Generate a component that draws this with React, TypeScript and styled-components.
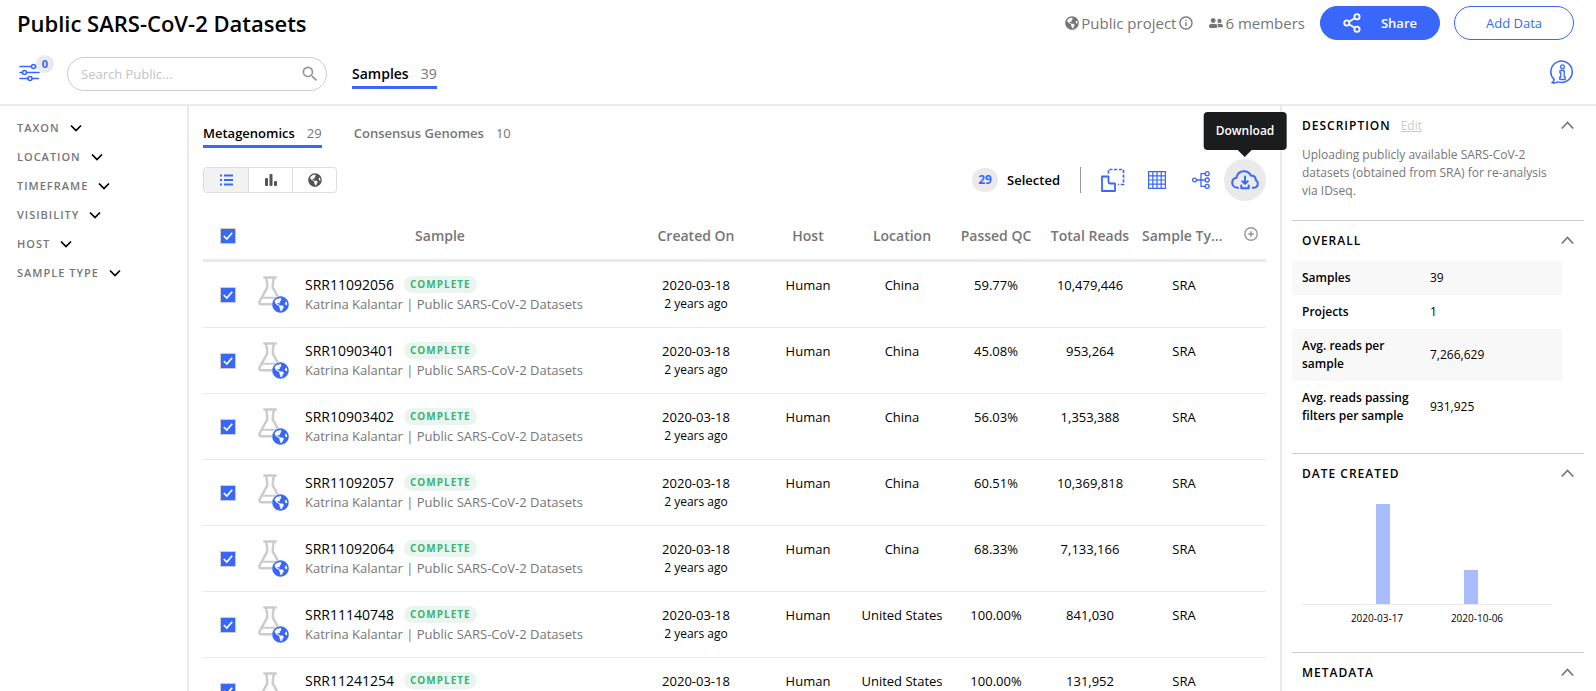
import React from 'react';
import styled, { createGlobalStyle, css } from 'styled-components';
import { FaGlobeAmericas, FaUserFriends } from 'react-icons/fa';
import { MdSearch, MdInfoOutline } from 'react-icons/md';

const BLUE = '#3867fa';
const GRAY = '#767676';
const LINE = '#eaeaea';

const GlobalStyle = createGlobalStyle`
  *, *::before, *::after { box-sizing: border-box; }
  body {
    margin: 0;
    background: #fff;
    color: #000;
    font-family: 'Open Sans', 'Noto Sans', sans-serif;
    font-size: 13px;
    line-height: 18px;
  }
  button, input { font: inherit; color: inherit; }
  button { background: none; border: 0; padding: 0; cursor: pointer; }
  h1, h2, p { margin: 0; font-weight: inherit; }
  svg { display: block; flex: none; }
`;

const Page = styled.div`
  display: flex;
  flex-direction: column;
  height: 100vh;
  min-width: 1200px;
  overflow: hidden;
`;

const Header = styled.header`
  flex: none;
  border-bottom: 2px solid ${LINE};
`;

const TitleBar = styled.div`
  display: flex;
  align-items: center;
  height: 46px;
  padding: 0 22px 0 17px;
`;

const Title = styled.h1`
  flex: 1;
  font-size: 22px;
  line-height: 30px;
  font-weight: 600;
`;

const Meta = styled.div`
  display: flex;
  align-items: center;
  color: ${GRAY};
  font-size: 15px;
  gap: 2px;
  margin-right: 15px;
`;

const PillButton = styled.button<{ $primary?: boolean }>`
  display: flex;
  align-items: center;
  justify-content: center;
  width: 120px;
  height: 34px;
  border-radius: 17px;
  border: 1px solid ${BLUE};
  color: ${p => (p.$primary ? '#fff' : BLUE)};
  background: ${p => (p.$primary ? BLUE : '#fff')};
  font-weight: ${p => (p.$primary ? 600 : 400)};
  gap: 20px;
  & + & { margin-left: 14px; }
`;

const ToolBar = styled.div`
  display: flex;
  align-items: center;
  height: 58px;
  padding: 0 22px 2px 17px;
`;

const FilterToggle = styled.button`
  position: relative;
  display: flex;
  width: 50px;
  height: 26px;
  margin-bottom: 4px;
  align-items: center;
`;

const FilterCount = styled.span`
  position: absolute;
  top: -4px;
  left: 19px;
  width: 18px;
  height: 18px;
  border-radius: 50%;
  background: ${LINE};
  color: ${BLUE};
  font-size: 11px;
  font-weight: 700;
  text-align: center;
`;

const SearchBox = styled.label`
  display: flex;
  align-items: center;
  width: 260px;
  height: 34px;
  border: 1px solid #ccc;
  border-radius: 17px;
  padding: 0 6px 0 11px;
  color: #999;
`;

const SearchInput = styled.input`
  flex: 1;
  min-width: 0;
  border: 0;
  outline: 0;
  background: none;
  &::placeholder { color: #c3c3c3; opacity: 1; }
`;

const Tabs = styled.nav`
  display: flex;
  gap: 32px;
`;

const HeaderTabs = styled(Tabs)`
  margin: 4px 0 0 25px;
`;

const Tab = styled.button<{ $active?: boolean; $large?: boolean }>`
  display: flex;
  gap: 12px;
  font-weight: 600;
  font-size: ${p => (p.$large ? 14 : 13)}px;
  line-height: 20px;
  padding-bottom: 2px;
  border-bottom: 3px solid ${p => (p.$active ? BLUE : 'transparent')};
  color: ${p => (p.$active ? '#000' : GRAY)};
`;

const Count = styled.span`
  color: ${GRAY};
  font-weight: 400;
`;

const InfoButton = styled.button`
  margin: 0 0 4px auto;
`;

const Body = styled.div`
  flex: 1;
  display: flex;
  min-height: 0;
`;

const FilterPanel = styled.aside`
  flex: none;
  width: 189px;
  border-right: 2px solid ${LINE};
  padding: 12px 17px;
  display: flex;
  flex-direction: column;
  align-items: flex-start;
  gap: 9px;
`;

const FilterButton = styled.button`
  display: flex;
  align-items: center;
  gap: 10px;
  height: 20px;
  font-size: 11px;
  font-weight: 600;
  letter-spacing: 1px;
  color: ${GRAY};
`;

const Main = styled.main`
  flex: 1;
  min-width: 0;
  padding: 17px 14px 0;
`;

const Controls = styled.div`
  display: flex;
  align-items: center;
  height: 42px;
  margin-top: 11px;
`;

const Segments = styled.div`
  display: flex;
  border: 1px solid #ddd;
  border-radius: 4px;
  overflow: hidden;
`;

const Segment = styled.button<{ $active?: boolean }>`
  display: flex;
  align-items: center;
  justify-content: center;
  width: 44px;
  height: 24px;
  color: ${p => (p.$active ? BLUE : '#545454')};
  background: ${p => (p.$active ? '#f2f2f2' : '#fff')};
  & + & { border-left: 1px solid #ddd; }
`;

const Selected = styled.div`
  display: flex;
  align-items: center;
  gap: 9px;
  margin-left: auto;
  padding-right: 20px;
  font-weight: 600;
  border-right: 1px solid #999;
  height: 26px;
`;

const SelectedCount = styled.span`
  width: 26px;
  line-height: 24px;
  border-radius: 12px;
  background: ${LINE};
  color: ${BLUE};
  font-size: 12px;
  font-weight: 700;
  text-align: center;
`;

const Actions = styled.div`
  display: flex;
  align-items: center;
  padding-left: 9px;
`;

const ActionButton = styled.button<{ $active?: boolean }>`
  position: relative;
  display: flex;
  align-items: center;
  justify-content: center;
  width: 42px;
  height: 42px;
  margin-left: 2px;
  border-radius: 50%;
  color: ${BLUE};
  background: ${p => (p.$active ? LINE : 'transparent')};
`;

const Tooltip = styled.span`
  position: absolute;
  z-index: 2;
  bottom: 51px;
  left: 50%;
  transform: translateX(-50%);
  padding: 10px 12px;
  border-radius: 4px;
  background: #1b1c1d;
  color: #fff;
  font-weight: 600;
  font-size: 12px;
  &::after {
    content: '';
    position: absolute;
    top: 100%;
    left: 50%;
    margin-left: -7px;
    border: 7px solid transparent;
    border-top-color: #1b1c1d;
    border-bottom: 0;
  }
`;

const Table = styled.table`
  width: 100%;
  margin-top: 12px;
  table-layout: fixed;
  border-collapse: separate;
  border-spacing: 0;
`;

const Col = styled.col<{ $w?: number }>`
  ${p => p.$w && css`width: ${p.$w}px;`}
`;

const Th = styled.th`
  height: 49px;
  padding: 0 5px;
  border-bottom: 3px solid ${LINE};
  color: ${GRAY};
  font-size: 14px;
  font-weight: 600;
  white-space: nowrap;
  overflow: hidden;
  text-overflow: ellipsis;
`;

const Td = styled.td<{ $check?: boolean }>`
  height: 66px;
  padding: ${p => (p.$check ? '0 5px' : '14px 5px 0')};
  border-bottom: 1px solid ${LINE};
  text-align: center;
  vertical-align: ${p => (p.$check ? 'middle' : 'top')};
  white-space: nowrap;
`;

const Clip = styled.div`
  overflow: hidden;
`;

const CheckLabel = styled.label`
  display: block;
  position: relative;
  width: 16px;
  height: 16px;
  margin-left: 12px;
`;

const CheckInput = styled.input`
  appearance: none;
  display: block;
  width: 16px;
  height: 16px;
  margin: 0;
  border: 1px solid #ccc;
  border-radius: 1px;
  &:checked { background: ${BLUE}; }
  &:checked + svg { visibility: visible; }
`;

const CheckMark = styled.svg`
  position: absolute;
  inset: 0;
  visibility: hidden;
  pointer-events: none;
`;

const SampleCell = styled.div`
  display: flex;
  gap: 14px;
  text-align: left;
`;

const FlaskBox = styled.span`
  position: relative;
  width: 37px;
  height: 38px;
  padding-left: 4px;
  color: #ccc;
`;

const PublicBadge = styled.span`
  position: absolute;
  right: 2px;
  bottom: 1px;
  border-radius: 50%;
  background: #fff;
  color: ${BLUE};
`;

const SampleText = styled.div`
  display: flex;
  flex-direction: column;
  gap: 1px;
`;

const SampleName = styled.div`
  display: flex;
  align-items: center;
  gap: 10px;
  font-size: 14px;
`;

const Status = styled.span`
  padding: 0 6px;
  border-radius: 9px;
  background: #ebf5f0;
  color: #3cb371;
  font-size: 10px;
  line-height: 17px;
  font-weight: 700;
  letter-spacing: 1px;
`;

const Muted = styled.div`
  color: ${GRAY};
  font-size: 13px;
`;

const Small = styled.div`
  margin-top: 1px;
  font-size: 12px;
`;

const AddColumn = styled.button`
  display: block;
  margin: 0 auto 4px 8px;
  color: #999;
`;

const Details = styled.aside`
  flex: none;
  width: 316px;
  border-left: 2px solid ${LINE};
  padding: 0 12px 0 10px;
`;

const Section = styled.section`
  padding: 10px 10px 20px;
  & + & { border-top: 1px solid #ccc; }
`;

const SectionHead = styled.div`
  display: flex;
  align-items: center;
  gap: 10px;
  height: 20px;
`;

const SectionTitle = styled.h2`
  font-size: 12px;
  font-weight: 600;
  letter-spacing: 1px;
`;

const EditLink = styled.a`
  color: #ccc;
  font-size: 12px;
`;

const Collapse = styled.button`
  margin-left: auto;
  color: ${GRAY};
`;

const Description = styled.p`
  margin-top: 10px;
  padding-right: 12px;
  color: ${GRAY};
  font-size: 12px;
`;

const Facts = styled.table`
  width: 270px;
  margin: 10px 0 0 -10px;
  border-collapse: collapse;
  font-size: 12px;
  text-align: left;
  tr:nth-child(odd) { background: #f8f8f8; }
  th { width: 128px; padding: 8px 0 8px 10px; font-weight: 600; }
  td { padding: 8px 0 8px 10px; }
`;

const Chart = styled.svg`
  margin-top: 20px;
`;

const ChevronDown = () => (
  <svg width="12" height="12" viewBox="0 0 12 12" fill="none" stroke="#000" strokeWidth="1.7">
    <path d="M1 3.500 6 8.500 11 3.500" />
  </svg>
);

const ChevronUp = () => (
  <svg width="13" height="10" viewBox="0 0 13 10" fill="none" stroke="currentColor" strokeWidth="1.7">
    <path d="M.8 7.500 6.500 1.500 12.200 7.500" />
  </svg>
);

const FiltersIcon = () => (
  <svg width="26" height="20" viewBox="0 0 26 20" fill="none" stroke={BLUE} strokeWidth="1.6" strokeLinecap="round">
    <path d="M3 4.500h11M19 4.500h2M3 10.500h2.500M10 10.500h12M3 16.500h8M15.500 16.500h6" />
    <circle cx="16.500" cy="4.500" r="2" />
    <circle cx="7.500" cy="10.500" r="2" />
    <circle cx="13" cy="16.500" r="2" />
  </svg>
);

const ShareIcon = () => (
  <svg width="18" height="20" viewBox="0 0 18 20" fill="none" stroke="#fff" strokeWidth="1.800">
    <circle cx="3.800" cy="10" r="2.600" />
    <circle cx="14" cy="3.800" r="2.600" />
    <circle cx="14" cy="16.200" r="2.600" />
    <path d="M6 8.700 11.700 5.200M6 11.300l5.700 3.500" />
  </svg>
);

const InfoBubble = () => (
  <svg width="24" height="26" viewBox="0 0 24 26" fill="none" stroke={BLUE} strokeWidth="1.500">
    <path d="M4.200 20.600A10.700 10.700 0 1 1 8 22.900c-1.600.9-3.600 1.300-6 .8 1.100-.7 2-1.700 2.200-3.100Z" strokeLinejoin="round" />
    <circle cx="12.500" cy="7.800" r="1.900" strokeWidth="1.300" />
    <path d="M10 11.500h4.200v6.500h1v2.500H9.800V18h1v-4H10Z" strokeWidth="1.300" strokeLinejoin="round" />
  </svg>
);

const ListIcon = () => (
  <svg width="13" height="12" viewBox="0 0 13 12" fill="currentColor">
    <path d="M0 .5h2v2H0zM4 .5h9v2H4zM0 5h2v2H0zM4 5h9v2H4zM0 9.500h2v2H0zM4 9.500h9v2H4z" />
  </svg>
);

const BarsIcon = () => (
  <svg width="12" height="12" viewBox="0 0 12 12" fill="currentColor">
    <rect x="0" y="4" width="3" height="8" rx="1" />
    <rect x="4.500" y="0" width="3" height="12" rx="1" />
    <rect x="9" y="7" width="3" height="5" rx="1" />
  </svg>
);

const BackgroundIcon = () => (
  <svg width="24" height="24" viewBox="0 0 24 24" fill="none" stroke="currentColor" strokeWidth="1.800">
    <path d="M1 8.500h6.500v5c0 1.500.5 2 2 2H14V23H1z" strokeLinejoin="round" />
    <path d="M7.500 5.500V1.500h15v15H17" strokeWidth="1.700" strokeDasharray="3.200 1.600" />
  </svg>
);

const HeatmapIcon = () => (
  <svg width="18" height="18" viewBox="0 0 18 18" fill="none" stroke="currentColor" strokeWidth="1.200">
    <path d="M.6.6h16.800v16.800H.6zM4.800.6v16.800M9 .6v16.800M13.200.6v16.800M.6 4.800h16.800M.6 9h16.800M.6 13.200h16.800" />
  </svg>
);

const TreeIcon = () => (
  <svg width="18" height="18" viewBox="0 0 18 18" fill="none" stroke="currentColor" strokeWidth="1.300">
    <circle cx="2.500" cy="9" r="1.900" />
    <circle cx="15.200" cy="2.700" r="2" />
    <circle cx="15.200" cy="9" r="2" />
    <circle cx="15.200" cy="15.300" r="2" />
    <path d="M4.400 9h8.800M13.200 2.700H9v12.600h4.200" />
  </svg>
);

const CloudIcon = () => (
  <svg width="28" height="20" viewBox="0 0 28 20" fill="none" stroke="currentColor" strokeWidth="2" strokeLinecap="round" strokeLinejoin="round">
    <path d="M7 17.800C3.500 17.800 1.200 15.600 1.200 12.700c0-2.600 1.700-4.600 4.200-5C6.200 3.800 9.200 1.200 13 1.200c3 0 5.600 1.600 6.800 4.300 3.200 0 5 2 5 4.600 1.300.7 2 1.900 2 3.300 0 2.600-2 4.400-5 4.400" />
    <path d="M14 6.500v7M11.300 11.200 14 13.900l2.700-2.700M10.300 15.500v2.700h7.400v-2.700" />
  </svg>
);

const PlusCircle = () => (
  <svg width="14" height="14" viewBox="0 0 14 14" fill="none" stroke="currentColor" strokeWidth="1.400">
    <circle cx="7" cy="7" r="6.200" />
    <path d="M7 4.200v5.600M4.200 7h5.600" strokeWidth="1.600" />
  </svg>
);

const FlaskIcon = () => (
  <svg width="24" height="30" viewBox="0 0 24 30" fill="none" stroke="currentColor" strokeWidth="2.500" strokeLinejoin="round" strokeLinecap="round">
    <path d="M6.300 1.500h11.400M8 2.500c.8 1.500 1.200 3.500 1.200 9.200L1.700 25.200c-.7 1.600 0 3 1.600 3h17.400c1.600 0 2.300-1.400 1.600-3L14.800 11.700c0-5.700.4-7.700 1.200-9.200" />
    <path d="M5 21.800h14" strokeWidth="2" />
  </svg>
);

const Check = ({ label }: { label: string }) => (
  <CheckLabel>
    <CheckInput type="checkbox" defaultChecked aria-label={label} />
    <CheckMark width="16" height="16" viewBox="0 0 16 16" fill="none" stroke="#fff" strokeWidth="1.700">
      <path d="M3.800 8 6.800 11 12.200 4.800" />
    </CheckMark>
  </CheckLabel>
);

const filters = ['Taxon', 'Location', 'Timeframe', 'Visibility', 'Host', 'Sample type'];

const columns = ['Created On', 'Host', 'Location', 'Passed QC', 'Total Reads', 'Sample Type'];

const samples = [
  { name: 'SRR11092056', location: 'China', qc: '59.77%', reads: '10,479,446' },
  { name: 'SRR10903401', location: 'China', qc: '45.08%', reads: '953,264' },
  { name: 'SRR10903402', location: 'China', qc: '56.03%', reads: '1,353,388' },
  { name: 'SRR11092057', location: 'China', qc: '60.51%', reads: '10,369,818' },
  { name: 'SRR11092064', location: 'China', qc: '68.33%', reads: '7,133,166' },
  { name: 'SRR11140748', location: 'United States', qc: '100.00%', reads: '841,030' },
  { name: 'SRR11241254', location: 'United States', qc: '100.00%', reads: '131,952' },
];

const facts = [
  ['Samples', '39'],
  ['Projects', '1'],
  ['Avg. reads per sample', '7,266,629'],
  ['Avg. reads passing filters per sample', '931,925'],
];

const PanelSection = ({ title, link, children }: {
  title: string; link?: React.ReactNode; children?: React.ReactNode;
}) => (
  <Section>
    <SectionHead>
      <SectionTitle>{title.toUpperCase()}</SectionTitle>
      {link}
      <Collapse aria-label={`Collapse ${title}`}><ChevronUp /></Collapse>
    </SectionHead>
    {children}
  </Section>
);

export default function App() {
  return (
    <Page>
      <GlobalStyle />
      <Header>
        <TitleBar>
          <Title>Public SARS-CoV-2 Datasets</Title>
          <Meta><FaGlobeAmericas size={14} />Public project <MdInfoOutline size={16} /></Meta>
          <Meta><FaUserFriends size={14} />6 members</Meta>
          <PillButton $primary><ShareIcon />Share</PillButton>
          <PillButton>Add Data</PillButton>
        </TitleBar>
        <ToolBar>
          <FilterToggle aria-label="Filters">
            <FiltersIcon />
            <FilterCount>0</FilterCount>
          </FilterToggle>
          <SearchBox>
            <SearchInput type="text" placeholder="Search Public..." aria-label="Search Public" />
            <MdSearch size={20} />
          </SearchBox>
          <HeaderTabs>
            <Tab $active $large>Samples <Count>39</Count></Tab>
          </HeaderTabs>
          <InfoButton aria-label="Project info"><InfoBubble /></InfoButton>
        </ToolBar>
      </Header>
      <Body>
        <FilterPanel>
          {filters.map(f => (
            <FilterButton key={f}>{f.toUpperCase()} <ChevronDown /></FilterButton>
          ))}
        </FilterPanel>
        <Main>
          <Tabs>
            <Tab $active>Metagenomics <Count>29</Count></Tab>
            <Tab>Consensus Genomes <Count>10</Count></Tab>
          </Tabs>
          <Controls>
            <Segments>
              <Segment $active aria-label="Table view"><ListIcon /></Segment>
              <Segment aria-label="Plot view"><BarsIcon /></Segment>
              <Segment aria-label="Map view"><FaGlobeAmericas size={14} /></Segment>
            </Segments>
            <Selected><SelectedCount>29</SelectedCount>Selected</Selected>
            <Actions>
              <ActionButton aria-label="Background"><BackgroundIcon /></ActionButton>
              <ActionButton aria-label="Heatmap"><HeatmapIcon /></ActionButton>
              <ActionButton aria-label="Phylogenetic tree"><TreeIcon /></ActionButton>
              <ActionButton $active>
                <CloudIcon />
                <Tooltip>Download</Tooltip>
              </ActionButton>
            </Actions>
          </Controls>
          <Table>
            <colgroup>
              <Col $w={46} />
              <Col />
              <Col $w={130} />
              <Col $w={94} />
              <Col $w={94} />
              <Col $w={94} />
              <Col $w={94} />
              <Col $w={94} />
              <Col $w={35} />
            </colgroup>
            <thead>
              <tr>
                <Th><Check label="Select all samples" /></Th>
                <Th>Sample</Th>
                {columns.map(c => <Th key={c}>{c}</Th>)}
                <Th><AddColumn aria-label="Add column"><PlusCircle /></AddColumn></Th>
              </tr>
            </thead>
            <tbody>
              {samples.map(s => (
                <tr key={s.name}>
                  <Td $check><Check label={`Select ${s.name}`} /></Td>
                  <Td $check>
                    <SampleCell>
                      <FlaskBox>
                        <FlaskIcon />
                        <PublicBadge><FaGlobeAmericas size={17} /></PublicBadge>
                      </FlaskBox>
                      <SampleText>
                        <SampleName>{s.name} <Status>COMPLETE</Status></SampleName>
                        <Muted>Katrina Kalantar | Public SARS-CoV-2 Datasets</Muted>
                      </SampleText>
                    </SampleCell>
                  </Td>
                  <Td>2020-03-18<Small>2 years ago</Small></Td>
                  <Td>Human</Td>
                  <Td><Clip>{s.location}</Clip></Td>
                  <Td>{s.qc}</Td>
                  <Td>{s.reads}</Td>
                  <Td>SRA</Td>
                  <Td />
                </tr>
              ))}
            </tbody>
          </Table>
        </Main>
        <Details>
          <PanelSection title="Description" link={<EditLink href="#edit">Edit</EditLink>}>
            <Description>
              Uploading publicly available SARS-CoV-2 datasets (obtained from SRA) for re-analysis via IDseq.
            </Description>
          </PanelSection>
          <PanelSection title="Overall">
            <Facts>
              <tbody>
                {facts.map(([k, v]) => (
                  <tr key={k}><th scope="row">{k}</th><td>{v}</td></tr>
                ))}
              </tbody>
            </Facts>
          </PanelSection>
          <PanelSection title="Date created">
            <Chart width="250" height="128" viewBox="0 0 250 128">
              <rect x="74" y="0" width="14" height="100" fill="#a9bdfc" />
              <rect x="162" y="66" width="14" height="34" fill="#a9bdfc" />
              <rect x="0" y="100" width="250" height="1" fill={LINE} />
              <g fontSize="10" textAnchor="middle">
                <text x="75" y="118">2020-03-17</text>
                <text x="175" y="118">2020-10-06</text>
              </g>
            </Chart>
          </PanelSection>
          <PanelSection title="Metadata" />
        </Details>
      </Body>
    </Page>
  );
}
